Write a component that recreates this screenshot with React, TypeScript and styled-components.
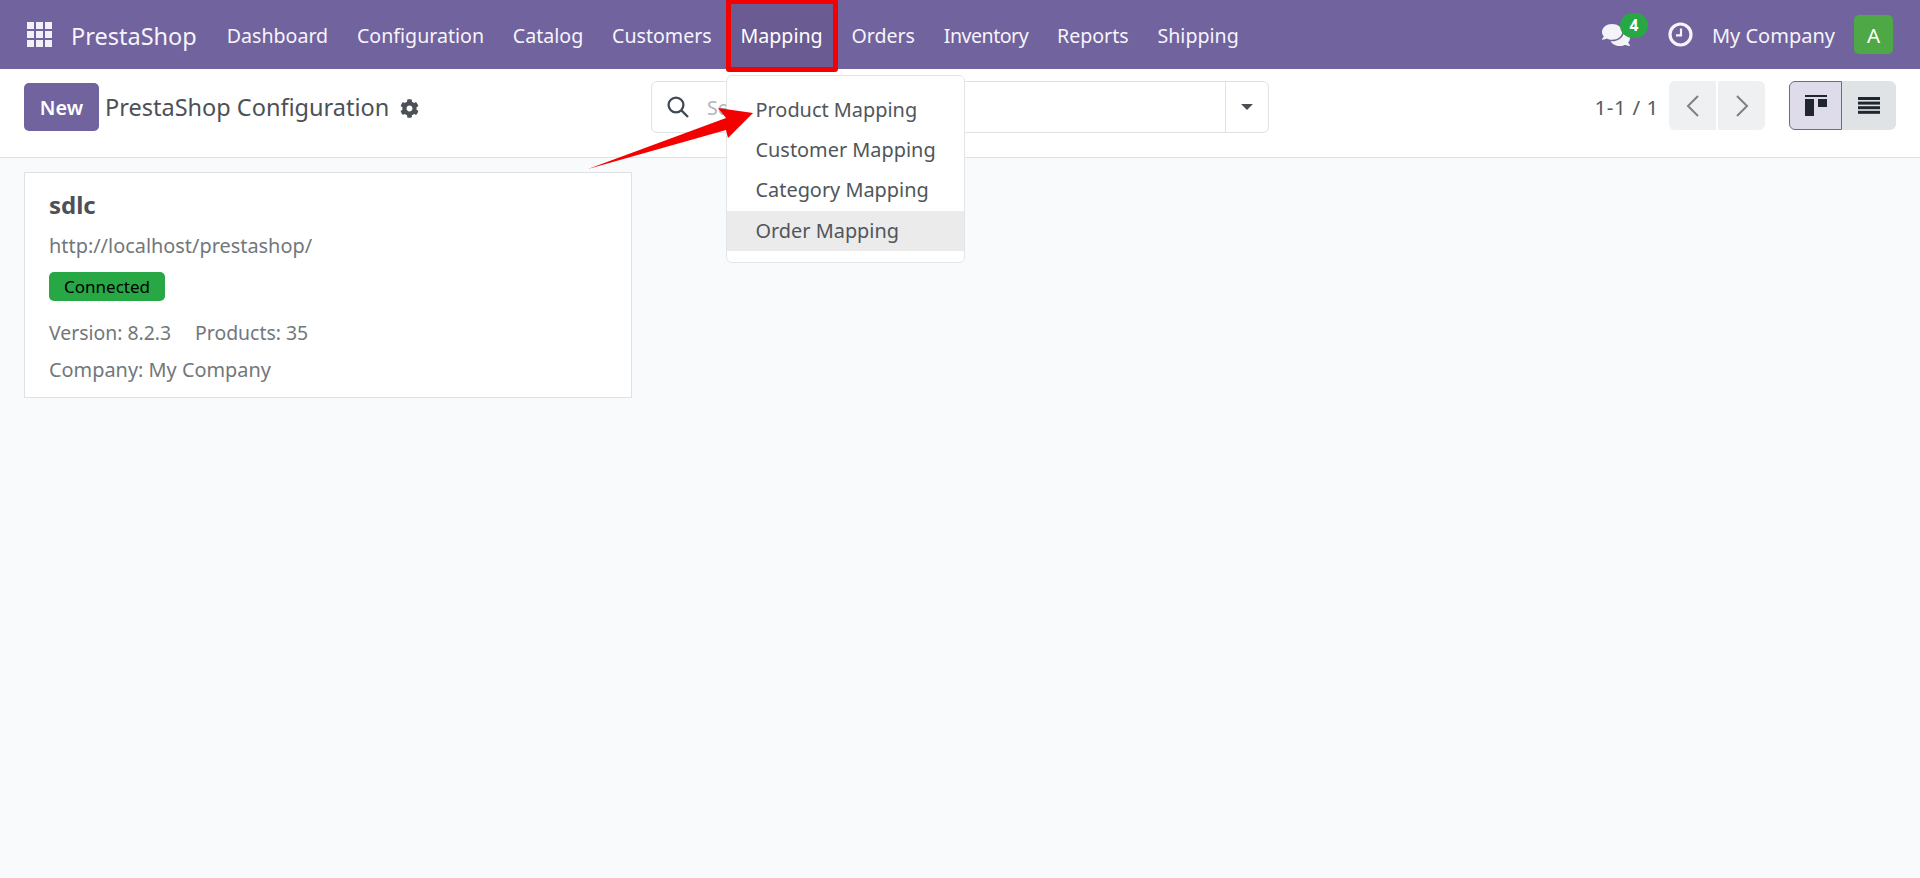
import React from "react";
import styled, { createGlobalStyle } from "styled-components";
import { FaCog, FaComments } from "react-icons/fa";

const GlobalStyle = createGlobalStyle`
  html, body { margin: 0; padding: 0; height: 100%; }
  body {
    font-family: "Noto Sans", "Open Sans", sans-serif;
    background: #f9fafb;
    color: #4b5157;
    overflow: hidden;
  }
`;

const Page = styled.div`
  position: relative;
  width: 1920px;
  height: 878px;
`;

const NavBar = styled.header`
  height: 69px;
  box-sizing: border-box;
  background: #71639e;
  display: flex;
  align-items: center;
  padding: 0 27px;
  color: #fff;
`;

const Brand = styled.div`
  font-size: 23.5px;
  margin: 3px 30px 0 19px;
  color: #f6f4fa;
`;

const Menu = styled.nav`
  display: flex;
  align-items: center;
  gap: 28.8px;
  font-size: 19.6px;
  margin-top: 2px;
  flex: 1;
  color: #f6f4fa;
`;

const MenuItem = styled.span<{ $active?: boolean; $tight?: boolean }>`
  position: relative;
  letter-spacing: ${(p) => (p.$tight ? "-0.5px" : "normal")};
  ${(p) => p.$active && `
    color: #fff;
    &::before {
      content: "";
      position: absolute;
      left: -15px;
      right: -15px;
      top: -23px;
      height: 63px;
      border: 5px solid #f40000;
      border-radius: 3px;
      background: #6a5b92;
    }
  `}
`;

const MenuLabel = styled.span`
  position: relative;
`;

const Systray = styled.div`
  display: flex;
  align-items: center;
  font-size: 20px;
  color: #f6f4fa;
`;

const Messages = styled.div`
  position: relative;
  display: flex;
  margin-right: 38px;
`;

const Badge = styled.span`
  position: absolute;
  left: 18px;
  top: -8px;
  width: 28px;
  height: 25px;
  border-radius: 13px;
  background: #28a745;
  color: #fff;
  font-size: 15.5px;
  font-weight: 700;
  display: flex;
  align-items: center;
  justify-content: center;
`;

const Company = styled.span`
  margin: 2px 19px 0;
`;

const Avatar = styled.span`
  width: 39px;
  height: 39px;
  border-radius: 5px;
  background: #4ea845;
  color: #fff;
  font-size: 20.5px;
  display: flex;
  align-items: center;
  justify-content: center;
`;

const ControlPanel = styled.div`
  height: 89px;
  box-sizing: border-box;
  background: #fff;
  border-bottom: 1px solid #dee2e6;
  display: grid;
  grid-template-columns: 1fr 618px 1fr;
  padding: 12px 24px 0 24px;
`;

const PanelLeft = styled.div`
  display: flex;
  align-items: flex-start;
`;

const NewButton = styled.button`
  width: 75px;
  height: 48px;
  margin-top: 2px;
  border: none;
  border-radius: 5px;
  background: #71639e;
  color: #fff;
  font: 600 19.8px "Noto Sans", sans-serif;
  padding: 1px 0 0;
`;

const Title = styled.div`
  font-size: 23.5px;
  line-height: 52px;
  margin-left: 6px;
  color: #4b5157;
`;

const Gear = styled.span`
  display: flex;
  margin: 18px 0 0 11px;
  color: #4b5157;
  font-size: 19px;
`;

const SearchBar = styled.div`
  height: 52px;
  box-sizing: border-box;
  border: 1px solid #dee2e6;
  border-radius: 6px;
  display: flex;
  align-items: center;
  background: #fff;
`;

const SearchIcon = styled.svg`
  margin-left: 15px;
  flex: none;
`;

const SearchInput = styled.span`
  flex: 1;
  margin-left: 18px;
  color: #adb5bd;
  font-size: 19.6px;
`;

const SearchToggle = styled.span`
  width: 42px;
  height: 100%;
  border-left: 1px solid #dee2e6;
  display: flex;
  align-items: center;
  justify-content: center;
`;

const Caret = styled.span`
  width: 0;
  height: 0;
  border-left: 6px solid transparent;
  border-right: 6px solid transparent;
  border-top: 6px solid #495057;
`;

const PanelRight = styled.div`
  display: flex;
  justify-content: flex-end;
  align-items: flex-start;
`;

const PagerText = styled.span`
  font-size: 20.6px;
  line-height: 52px;
  letter-spacing: 0.6px;
  margin-right: 10px;
  color: #555b61;
`;

const PagerGroup = styled.div`
  display: flex;
  gap: 2px;
  margin-right: 24px;
`;

const PagerButton = styled.span<{ $side: "left" | "right" }>`
  width: 47px;
  height: 49px;
  background: #eef0f1;
  border-radius: ${(p) => (p.$side === "left" ? "6px 0 0 6px" : "0 6px 6px 0")};
  display: flex;
  align-items: center;
  justify-content: center;
  color: #7b8288;
`;

const ViewGroup = styled.div`
  display: flex;
`;

const ViewButton = styled.span<{ $active?: boolean }>`
  width: ${(p) => (p.$active ? "53px" : "54px")};
  height: 49px;
  box-sizing: border-box;
  display: flex;
  align-items: center;
  justify-content: center;
  background: ${(p) => (p.$active ? "#dedcea" : "#e0e3e5")};
  border: ${(p) => (p.$active ? "1px solid #71639e" : "none")};
  border-radius: ${(p) => (p.$active ? "6px 0 0 6px" : "0 6px 6px 0")};
`;

const Content = styled.main`
  padding: 14px 24px;
`;

const Card = styled.article`
  width: 608px;
  height: 226px;
  box-sizing: border-box;
  background: #fff;
  border: 1px solid #dee2e6;
  padding: 15px 24px 0;
`;

const CardName = styled.div`
  font-size: 24px;
  font-weight: 700;
  line-height: 33px;
  color: #4b5157;
`;

const CardLine = styled.div`
  font-size: 19.9px;
  line-height: 27px;
  color: #71777c;
  margin-top: 11px;
`;

const CardStats = styled(CardLine)`
  display: flex;
  gap: 24px;
  margin-top: 18px;
  font-size: 19.4px;
`;

const CardCompany = styled(CardLine)`
  margin-top: 10px;
`;

const StatusBadge = styled.span`
  display: inline-block;
  margin-top: 13px;
  background: #28a745;
  color: #000;
  font-size: 17px;
  line-height: 29px;
  padding: 0 15px;
  border-radius: 5px;
`;

const Dropdown = styled.div`
  position: absolute;
  left: 725.5px;
  top: 75px;
  width: 239.5px;
  height: 188px;
  box-sizing: border-box;
  padding-top: 13.5px;
  background: #fff;
  border: 1px solid #e3e6e9;
  border-radius: 6px;
`;

const DropdownItem = styled.div<{ $hover?: boolean }>`
  height: 40.4px;
  line-height: 40px;
  padding-left: 29px;
  font-size: 19.9px;
  color: #50565b;
  background: ${(p) => (p.$hover ? "#ebebeb" : "transparent")};
`;

const Arrow = styled.svg`
  position: absolute;
  left: 580px;
  top: 100px;
`;

const AppsIcon = () => (
  <svg width="25" height="25" viewBox="0 0 25 25" fill="#f3f1f8">
    {[0, 9, 18].flatMap((y) =>
      [0, 9, 18].map((x) => <rect key={`${x}-${y}`} x={x} y={y} width="7" height="7" />)
    )}
  </svg>
);

const ClockIcon = () => (
  <svg width="25" height="25" viewBox="0 0 25 25" fill="none" stroke="#f6f4fa">
    <circle cx="12.5" cy="12.5" r="10.5" strokeWidth="3.2" />
    <path d="M13 6.5v6.8H8" strokeWidth="2.2" />
  </svg>
);

const KanbanIcon = () => (
  <svg width="22" height="21" viewBox="0 0 22 21" fill="#1f2630">
    <rect x="0" y="0" width="22" height="2" />
    <rect x="0" y="4" width="9" height="17" />
    <rect x="13" y="4" width="9" height="8" />
  </svg>
);

const ListIcon = () => (
  <svg width="22" height="17" viewBox="0 0 22 17" fill="#1f2630">
    <rect y="0" width="22" height="3" />
    <rect y="4.6" width="22" height="3" />
    <rect y="9.2" width="22" height="3" />
    <rect y="13.8" width="22" height="3" />
  </svg>
);

const Chevron = ({ dir }: { dir: "left" | "right" }) => (
  <svg width="14" height="24" viewBox="0 0 14 24" fill="none" stroke="currentColor" strokeWidth="2">
    <path d={dir === "left" ? "M12 2 2 12l10 10" : "M2 2l10 10L2 22"} />
  </svg>
);

const menuItems = ["Dashboard", "Configuration", "Catalog", "Customers", "Mapping", "Orders", "Inventory", "Reports", "Shipping"];

export default function App() {
  return (
    <Page>
      <GlobalStyle />
      <NavBar>
        <AppsIcon />
        <Brand>PrestaShop</Brand>
        <Menu>
          {menuItems.map((m) => (
            <MenuItem key={m} $active={m === "Mapping"} $tight={m === "Inventory"}>
              <MenuLabel>{m}</MenuLabel>
            </MenuItem>
          ))}
        </Menu>
        <Systray>
          <Messages>
            <FaComments size={28} color="#f3f3f8" />
            <Badge>4</Badge>
          </Messages>
          <ClockIcon />
          <Company>My Company</Company>
          <Avatar>A</Avatar>
        </Systray>
      </NavBar>
      <ControlPanel>
        <PanelLeft>
          <NewButton>New</NewButton>
          <Title>PrestaShop Configuration</Title>
          <Gear><FaCog /></Gear>
        </PanelLeft>
        <SearchBar>
          <SearchIcon width="22" height="22" viewBox="0 0 22 22" fill="none" stroke="#3f4a55" strokeWidth="2.3">
            <circle cx="9" cy="9" r="7.4" />
            <path d="M14.4 14.4 21 21" />
          </SearchIcon>
          <SearchInput>Search...</SearchInput>
          <SearchToggle><Caret /></SearchToggle>
        </SearchBar>
        <PanelRight>
          <PagerText>1-1 / 1</PagerText>
          <PagerGroup>
            <PagerButton $side="left"><Chevron dir="left" /></PagerButton>
            <PagerButton $side="right"><Chevron dir="right" /></PagerButton>
          </PagerGroup>
          <ViewGroup>
            <ViewButton $active><KanbanIcon /></ViewButton>
            <ViewButton><ListIcon /></ViewButton>
          </ViewGroup>
        </PanelRight>
      </ControlPanel>
      <Content>
        <Card>
          <CardName>sdlc</CardName>
          <CardLine>http://localhost/prestashop/</CardLine>
          <StatusBadge>Connected</StatusBadge>
          <CardStats><span>Version: 8.2.3</span><span>Products: 35</span></CardStats>
          <CardCompany>Company: My Company</CardCompany>
        </Card>
      </Content>
      <Dropdown>
        <DropdownItem>Product Mapping</DropdownItem>
        <DropdownItem>Customer Mapping</DropdownItem>
        <DropdownItem>Category Mapping</DropdownItem>
        <DropdownItem $hover>Order Mapping</DropdownItem>
      </Dropdown>
      <Arrow width="180" height="80" viewBox="0 0 180 80">
        <path d="M8 69 L146 18 L138 8 L173 13 L148 38 L146 30 Z" fill="#f40000" />
      </Arrow>
    </Page>
  );
}
